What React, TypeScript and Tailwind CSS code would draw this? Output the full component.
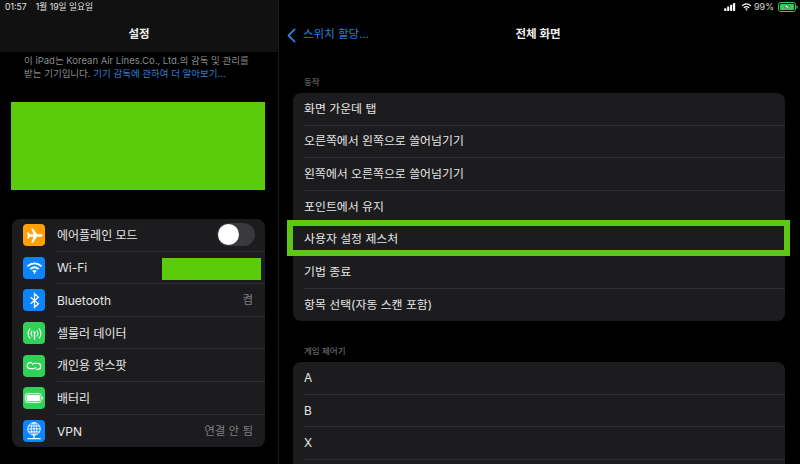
import React from "react";

const FONT = "font-['Inter','Noto_Sans_CJK_KR',sans-serif]";

function Plane() {
  return (
    <svg viewBox="0 0 24 24" className="h-[19px] w-[19px]" fill="white">
      <path d="M22 12c0-1-1-1.6-2.2-1.6h-4.7L10 3H8l2.6 7.4H6L4.2 8H2.6l1 4-1 4h1.6L6 13.6h4.6L8 21h2l5.1-7.4h4.7C21 13.6 22 13 22 12z" />
    </svg>
  );
}
function WifiGlyph({ className = "", color = "white" }: { className?: string; color?: string }) {
  return (
    <svg viewBox="0 0 24 18" className={className} fill="none" stroke={color} strokeWidth="2.6" strokeLinecap="butt">
      <path d="M2 6.6C8 1 16 1 22 6.6" />
      <path d="M6 10.6c3.6-3.2 8.4-3.2 12 0" />
      <path d="M9.6 14c1.5-1.2 3.3-1.2 4.8 0" />
      <circle cx="12" cy="16" r="1.2" fill={color} stroke="none" />
    </svg>
  );
}
function BluetoothGlyph() {
  return (
    <svg viewBox="0 0 24 24" className="h-[17px] w-[17px]" fill="none" stroke="white" strokeWidth="1.8">
      <path d="M6.5 7.5l11 9-5.5 5V2.5l5.5 5-11 9" />
    </svg>
  );
}
function Cellular() {
  return (
    <svg viewBox="0 0 24 24" className="h-[17px] w-[17px]" fill="none" stroke="white" strokeWidth="1.5" strokeLinecap="round">
      <path d="M5.5 5.5c-3.4 3.6-3.4 9.4 0 13" />
      <path d="M8.6 8.4c-1.8 2.1-1.8 5.1 0 7.2" />
      <path d="M18.5 5.5c3.4 3.6 3.4 9.4 0 13" />
      <path d="M15.4 8.4c1.8 2.1 1.8 5.1 0 7.2" />
      <circle cx="12" cy="10.5" r="1.6" fill="white" stroke="none" />
      <path d="M12 11v9" strokeWidth="1.8" />
    </svg>
  );
}
function Hotspot() {
  return (
    <svg viewBox="0 0 24 24" className="h-[18px] w-[18px]" fill="none" stroke="white" strokeWidth="1.6">
      <path d="M9.5 7.5H7a4 4 0 0 0 0 8h4.5a3.4 3.4 0 0 0 3-2" />
      <path d="M14.5 16.5H17a4 4 0 0 0 0-8h-4.5a3.4 3.4 0 0 0-3 2" />
    </svg>
  );
}
function BatteryIcon() {
  return (
    <svg viewBox="0 0 24 24" className="h-[20px] w-[20px]" fill="white">
      <rect x="1.5" y="6.5" width="19" height="11" rx="2.6" fill="none" stroke="white" strokeWidth="1" />
      <rect x="3" y="8" width="16" height="8" rx="1.4" />
      <rect x="21.4" y="10.2" width="1.2" height="3.6" rx="0.6" />
    </svg>
  );
}
function Vpn() {
  return (
    <svg viewBox="0 0 24 24" className="h-[20px] w-[20px]" fill="none" stroke="white" strokeWidth="1.1">
      <circle cx="12" cy="9.5" r="7.5" />
      <ellipse cx="12" cy="9.5" rx="3.4" ry="7.5" />
      <path d="M12 2v15M5 6h14M4.5 9.5h15M5 13h14" />
      <path d="M12 17v3.5M4 21h16" strokeWidth="1.5" />
    </svg>
  );
}
function Chevron() {
  return (
    <svg viewBox="0 0 10 16" className="h-[15px] w-[9px]" fill="none" stroke="#2f7fd6" strokeWidth="2" strokeLinecap="round" strokeLinejoin="round">
      <path d="M8.5 1.2L1.6 8l6.9 6.8" />
    </svg>
  );
}

type Row = { bg: string; icon: React.ReactNode; label: string; value?: string; toggle?: boolean; mask?: boolean };

const settings: Row[] = [
  { bg: "bg-[#ff9f0a]", icon: <Plane />, label: "에어플레인 모드", toggle: true },
  { bg: "bg-[#0a84ff]", icon: <WifiGlyph className="h-[14px] w-[17px]" />, label: "Wi-Fi", mask: true },
  { bg: "bg-[#0a84ff]", icon: <BluetoothGlyph />, label: "Bluetooth", value: "켬" },
  { bg: "bg-[#30d158]", icon: <Cellular />, label: "셀룰러 데이터" },
  { bg: "bg-[#30d158]", icon: <Hotspot />, label: "개인용 핫스팟" },
  { bg: "bg-[#30d158]", icon: <BatteryIcon />, label: "배터리" },
  { bg: "bg-[#0a84ff]", icon: <Vpn />, label: "VPN", value: "연결 안 됨" },
];

const actions = [
  "화면 가운데 탭",
  "오른쪽에서 왼쪽으로 쓸어넘기기",
  "왼쪽에서 오른쪽으로 쓸어넘기기",
  "포인트에서 유지",
  "사용자 설정 제스처",
  "기법 종료",
  "항목 선택(자동 스캔 포함)",
];

function SettingRow({ r, last }: { r: Row; last: boolean }) {
  return (
    <div className="flex h-[32.6px] items-center pl-[11px]">
      <div className={`flex h-[22px] w-[22px] shrink-0 items-center justify-center rounded-[4px] ${r.bg}`}>{r.icon}</div>
      <div className={`ml-[12px] flex h-full min-w-0 flex-1 items-center justify-between pr-[12px] ${last ? "" : "border-b border-[#2f2f31]"}`}>
        <span className="pt-[2px] text-[12px] text-[#e6e6e6]">{r.label}</span>
        {r.value && <span className="pt-[1px] text-[11.5px] text-[#7f7f82]">{r.value}</span>}
        {r.toggle && (
          <div className="-mr-[2px] flex h-[23px] w-[38px] items-center rounded-full bg-[#39393d] pl-[1px]">
            <div className="h-[21px] w-[21px] rounded-full bg-white" />
          </div>
        )}
        {r.mask && <div className="-mr-[8px] mt-[4px] h-[22px] w-[99px] bg-[#5acc0a]" />}
      </div>
    </div>
  );
}

function PlainRow({ label, last }: { label: string; last: boolean }) {
  return (
    <div className="h-[32.6px] pl-[11px]">
      <div className={`flex h-full items-center text-[11.9px] text-[#e6e6e6] ${last ? "" : "border-b border-[#2f2f31]"}`}>{label}</div>
    </div>
  );
}

export default function App() {
  return (
    <div className={`flex h-[464px] w-[800px] overflow-hidden bg-black ${FONT}`}>
      <aside className="flex h-full w-[279px] shrink-0 flex-col border-r border-[#1c1c1e]">
        <header className="h-[52px] shrink-0 bg-[#111112] pl-[5px] pt-[2px]">
          <div className="flex gap-[9px] text-[8.7px] leading-[11px] text-[#e2e2e2]">
            <span>01:57</span>
            <span>1월 19일 일요일</span>
          </div>
          <div className="mt-[13px] pr-[5px] text-center text-[11.5px] font-semibold text-[#f0f0f0]">설정</div>
        </header>
        <p className="mt-[2px] pl-[24px] text-[9.5px] leading-[13px] text-[#8a8a8e]">
          이 iPad는 Korean Air Lines.Co., Ltd.의 감독 및 관리를
          <br />
          받는 기기입니다. <span className="text-[#2f7fd6]">기기 감독에 관하여 더 알아보기...</span>
        </p>
        <div className="ml-[11px] mr-[13px] mt-[22px] h-[88px] bg-[#5acc0a]" />
        <div className="ml-[12px] mr-[13px] mt-[29px] overflow-hidden rounded-[8px] bg-[#1c1c1e]">
          {settings.map((r, i) => (
            <SettingRow key={r.label} r={r} last={i === settings.length - 1} />
          ))}
        </div>
      </aside>

      <main className="relative min-w-0 flex-1 pl-[14px] pr-[15px]">
        <div className="-mr-[15px] flex h-[13px] items-center justify-end pr-[2px] pt-[1px] text-[9px] text-[#d8d8d8]">
          <svg viewBox="0 0 13 9" className="h-[8px] w-[12px]" fill="white">
            <rect x="0" y="6" width="2.4" height="3" rx="0.5" />
            <rect x="3.3" y="4" width="2.4" height="5" rx="0.5" />
            <rect x="6.6" y="2" width="2.4" height="7" rx="0.5" />
            <rect x="9.9" y="0" width="2.4" height="9" rx="0.5" />
          </svg>
          <WifiGlyph className="ml-[5px] h-[8px] w-[11px]" />
          <span className="ml-[2px]">99%</span>
          <svg viewBox="0 0 20 10" className="ml-[4px] h-[10px] w-[20px]">
            <rect x="0.5" y="0.5" width="17" height="9" rx="2.4" fill="none" stroke="#30d158" strokeWidth="1" />
            <rect x="2" y="2" width="14" height="6" rx="1.2" fill="#30d158" />
            <rect x="18.4" y="3.4" width="1.2" height="3.2" rx="0.6" fill="#30d158" />
            <path d="M9.8 1L6.5 5.6h2.4L8 9l3.6-4.8H9.2L9.8 1z" fill="white" stroke="#000" strokeWidth="0.4" />
          </svg>
        </div>

        <div className="relative -ml-[6px] mt-[15px] flex h-[14px] items-center justify-center">
          <div className="absolute left-0 top-0 flex h-full items-center gap-[7px] text-[11.5px] text-[#2f7fd6]">
            <Chevron />
            <span>스위치 할당...</span>
          </div>
          <span className="ml-[4px] text-[11.5px] font-semibold text-[#f0f0f0]">전체 화면</span>
        </div>

        <div className="mt-[34px] pl-[11px] text-[8.5px] leading-[12px] text-[#7f7f82]">동작</div>
        <section className="mt-[5px] overflow-hidden rounded-[8px] bg-[#1c1c1e]">
          {actions.map((a, i) => (
            <PlainRow key={a} label={a} last={i === actions.length - 1} />
          ))}
        </section>

        <div className="mt-[24px] pl-[11px] text-[8.5px] leading-[12px] text-[#7f7f82]">게임 제어기</div>
        <section className="mt-[5px] rounded-t-[8px] bg-[#1c1c1e]">
          {["A", "B", "X", ""].map((a, i) => (
            <PlainRow key={i} label={a} last={false} />
          ))}
        </section>

        <div className="absolute left-[8px] top-[220px] h-[36px] w-[503px] border-[6px] border-[#5cc814]" />
      </main>
    </div>
  );
}
